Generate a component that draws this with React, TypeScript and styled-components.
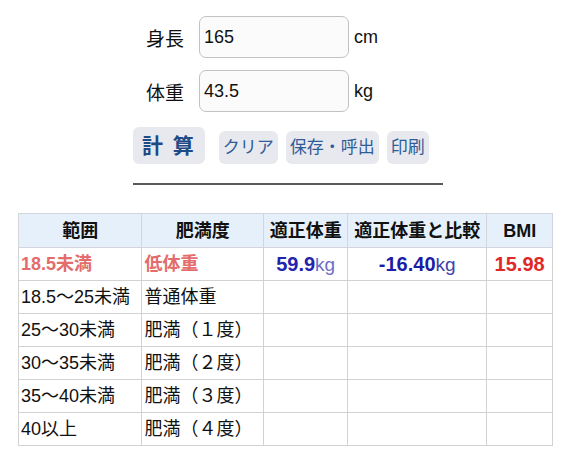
import React from "react";
import styled, { createGlobalStyle } from "styled-components";

const Global = createGlobalStyle`
  body {
    margin: 8px;
    background: #ffffff;
    font-family: "Liberation Sans", "Noto Sans CJK JP", sans-serif;
    color: #111;
  }
`;

const Page = styled.div`
  display: flex;
  flex-direction: column;
  align-items: center;
`;

const Form = styled.div`
  width: 310px;
  padding-top: 8px;
  display: flex;
  flex-direction: column;
`;

const FieldRow = styled.div`
  display: flex;
  align-items: center;
  padding-left: 13px;
  margin-bottom: 12px;
  font-size: 18px;
`;

const Label = styled.span`
  width: 38px;
  margin-right: 15px;
  font-size: 19px;
  white-space: nowrap;
`;

const Input = styled.input`
  box-sizing: border-box;
  width: 150px;
  height: 42px;
  border: 1px solid #c2c2c2;
  border-radius: 7px;
  background: #fbfbfb;
  padding: 0 4px;
  font-family: "Liberation Sans", "Noto Sans CJK JP", sans-serif;
  font-size: 18px;
  color: #111;
  outline: none;
`;

const Unit = styled.span`
  margin-left: 5px;
`;

const Buttons = styled.div`
  display: flex;
  align-items: flex-end;
  margin-top: 3px;
  gap: 8px;
`;

const Btn = styled.button<{ $main?: boolean }>`
  box-sizing: border-box;
  border: none;
  border-radius: 6px;
  background: #e8e9ee;
  font-family: "Liberation Sans", "Noto Sans CJK JP", sans-serif;
  color: ${(p) => (p.$main ? "#1e4a85" : "#2e5c98")};
  font-size: ${(p) => (p.$main ? "21px" : "17px")};
  font-weight: ${(p) => (p.$main ? 700 : 400)};
  height: ${(p) => (p.$main ? "37px" : "33px")};
  padding: ${(p) => (p.$main ? "0 9px" : "0 4px")};
  margin-right: ${(p) => (p.$main ? "6px" : "0")};
  letter-spacing: ${(p) => (p.$main ? "2px" : "0")};
  line-height: 1;
  white-space: pre;
`;

const Rule = styled.hr`
  width: 310px;
  margin: 19px 0 28px;
  border: none;
  border-top: 2px solid #5a5a5a;
`;

const Table = styled.table`
  border-collapse: collapse;
  width: 535px;
  align-self: flex-start;
  margin-left: 10px;
  font-size: 18px;
  border: 1px solid #cfcfcf;
`;

const Th = styled.th<{ $w: number }>`
  width: ${(p) => p.$w}px;
  background: #e6f0fb;
  border: 1px solid #d2d6dc;
  height: 33px;
  padding: 0 2px;
  font-weight: 700;
  text-align: center;
  line-height: 22px;
  white-space: nowrap;
`;

const Td = styled.td<{ $center?: boolean }>`
  border: 1px solid #d2d2d2;
  height: 32px;
  padding: 0 2px;
  line-height: 22px;
  text-align: ${(p) => (p.$center ? "center" : "left")};
  white-space: nowrap;
`;

const Under = styled.span`
  color: #e36c6c;
  font-weight: 700;
`;

const Big = styled.span<{ $color: string }>`
  color: ${(p) => p.$color};
  font-weight: 700;
  font-size: 20px;
`;

const Kg = styled.span<{ $color: string }>`
  color: ${(p) => p.$color};
  font-size: 19px;
`;

const rows: [string, string][] = [
  ["18.5〜25未満", "普通体重"],
  ["25〜30未満", "肥満（１度）"],
  ["30〜35未満", "肥満（２度）"],
  ["35〜40未満", "肥満（３度）"],
  ["40以上", "肥満（４度）"],
];

export default function App() {
  return (
    <>
      <Global />
      <Page>
        <Form>
          <FieldRow>
            <Label>身長</Label>
            <Input defaultValue="165" />
            <Unit>cm</Unit>
          </FieldRow>
          <FieldRow>
            <Label>体重</Label>
            <Input defaultValue="43.5" />
            <Unit>kg</Unit>
          </FieldRow>
          <Buttons>
            <Btn $main>{"計 算"}</Btn>
            <Btn>クリア</Btn>
            <Btn>保存・呼出</Btn>
            <Btn>印刷</Btn>
          </Buttons>
          <Rule />
        </Form>
        <Table>
          <thead>
            <tr>
              <Th $w={124}>範囲</Th>
              <Th $w={122}>肥満度</Th>
              <Th $w={83}>適正体重</Th>
              <Th $w={139}>適正体重と比較</Th>
              <Th $w={67}>BMI</Th>
            </tr>
          </thead>
          <tbody>
            <tr>
              <Td><Under>18.5未満</Under></Td>
              <Td><Under>低体重</Under></Td>
              <Td $center>
                <Big $color="#2323ae">59.9</Big>
                <Kg $color="#6e6ec6">kg</Kg>
              </Td>
              <Td $center>
                <Big $color="#1c1ca6">-16.40</Big>
                <Kg $color="#4040ac">kg</Kg>
              </Td>
              <Td $center>
                <Big $color="#e02828">15.98</Big>
              </Td>
            </tr>
            {rows.map(([a, b]) => (
              <tr key={a}>
                <Td>{a}</Td>
                <Td>{b}</Td>
                <Td />
                <Td />
                <Td />
              </tr>
            ))}
          </tbody>
        </Table>
      </Page>
    </>
  );
}
